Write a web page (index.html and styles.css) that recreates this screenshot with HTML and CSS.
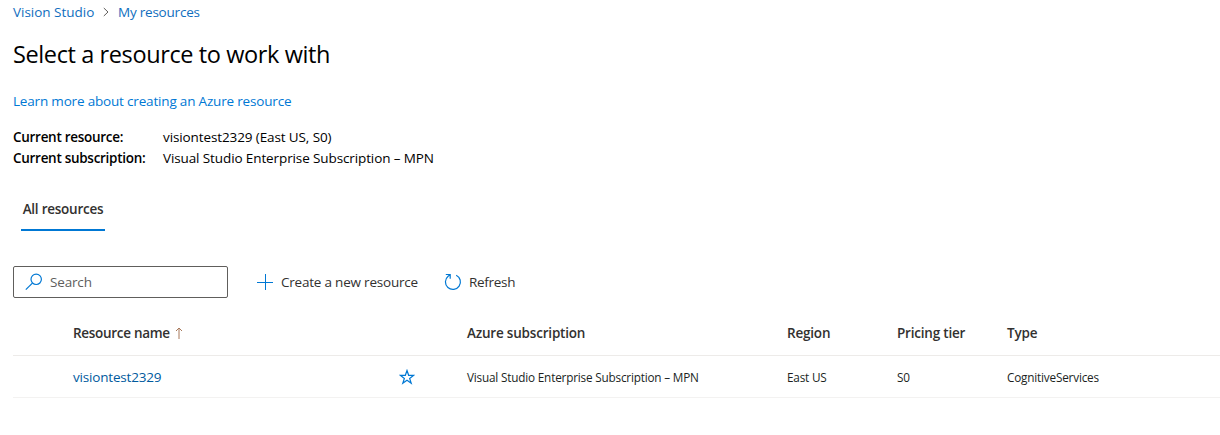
FILE: index.html
```html
<!DOCTYPE html>
<html lang="en">
<head>
<meta charset="utf-8">
<title>Vision Studio - My resources</title>
<link rel="stylesheet" href="styles.css">
</head>
<body>
<main class="page">
  <nav class="breadcrumb">
    <a class="crumb-home">Vision Studio</a>
    <svg class="chevron" width="6" height="10" viewBox="0 0 6 10"><path d="M.8 1 5 5 .8 9"/></svg>
    <a class="crumb-current">My resources</a>
  </nav>
  <h1 class="title"><span>Select a resource to work with</span></h1>
  <p class="learn"><a>Learn more about creating an Azure resource</a></p>
  <dl class="details">
    <dt><span class="label-resource">Current resource:</span></dt><dd><span class="current-resource">visiontest2329 (East US, S0)</span></dd>
    <dt><span class="label-subscription">Current subscription:</span></dt><dd><span class="current-subscription">Visual Studio Enterprise Subscription – MPN</span></dd>
  </dl>
  <div class="tabs"><button class="tab">All resources</button></div>
  <div class="toolbar">
    <div class="search">
      <svg class="icon" width="18" height="18" viewBox="0 0 18 18"><circle cx="11.2" cy="6.3" r="5.2"/><path d="M7.4 10.1.8 16.7"/></svg>
      <span>Search</span>
    </div>
    <button class="action create">
      <svg class="icon plus" width="16" height="16" viewBox="0 0 16 16"><path d="M8 0v16M0 8h16"/></svg>
      <span>Create a new resource</span>
    </button>
    <button class="action refresh">
      <svg class="icon" width="18" height="18" viewBox="0 0 18 18"><path d="M12.2 2.2a7.5 7.5 0 1 1-8.1 1L6 1.8M1.8 1.5H6.2V5.8"/></svg>
      <span>Refresh</span>
    </button>
  </div>
  <div class="table">
    <div class="row head">
      <div class="cell name"><span class="h-name">Resource name</span>
        <svg class="sort" width="8" height="12" viewBox="0 0 8 12"><path d="M4 12V1M1 4l3-3 3 3"/></svg></div>
      <div class="cell"><span class="h-sub">Azure subscription</span></div>
      <div class="cell"><span class="h-region">Region</span></div>
      <div class="cell"><span class="h-tier">Pricing tier</span></div>
      <div class="cell"><span class="h-type">Type</span></div>
    </div>
    <div class="row item">
      <div class="cell name"><a class="resource">visiontest2329</a>
        <svg class="star" width="16" height="16" viewBox="0 0 16 16"><path d="m8 1.5 1.65 4.8h5.1l-4.1 3.1 1.55 4.9L8 11.3l-4.2 3 1.55-4.9-4.1-3.1h5.1Z"/></svg></div>
      <div class="cell value"><span class="c-sub">Visual Studio Enterprise Subscription – MPN</span></div>
      <div class="cell value"><span class="c-region">East US</span></div>
      <div class="cell value"><span class="c-tier">S0</span></div>
      <div class="cell value"><span class="c-type">CognitiveServices</span></div>
    </div>
  </div>
</main>
</body>
</html>
```
FILE: styles.css
```css
* { box-sizing: border-box; }
body { margin: 0; background: #fff; color: #000; font: 13.5px/20px "Open Sans", "Noto Sans", sans-serif; letter-spacing: -.16px; overflow: hidden; }
.page { padding: 2px 0 0 13px; }
a { color: #0078d4; text-decoration: none; white-space: nowrap; }
svg { fill: none; flex: none; }
span { white-space: nowrap; }
button { font: inherit; letter-spacing: inherit; background: none; border: 0; padding: 0; }
.breadcrumb { display: flex; align-items: center; height: 20px; }
.breadcrumb a { color: #106ebe; }
.crumb-home { width: 90px; letter-spacing: -.02px; }
.chevron { stroke: #605e5c; margin-right: 9px; }
.crumb-current { letter-spacing: -.22px; }
.title { margin: 16px 0 0; height: 32px; font-size: 23.5px; line-height: 32px; font-weight: 400; letter-spacing: -.39px; }
.learn { margin: 21px 0 0; height: 20px; letter-spacing: -.18px; }
.details { margin: 16px 0 0; display: grid; grid-template-columns: 150px 1fr; grid-auto-rows: 21px; line-height: 21px; }
.details dd { margin: 0; letter-spacing: -.11px; }
.details dt, .head, .tab { font-weight: 600; }
.details dt { letter-spacing: -.29px; }
.tabs { display: flex; margin: 19px 0 0 8px; }
.tab { width: 84px; height: 43px; border-bottom: 2px solid #0078d4; color: #323130; white-space: nowrap; letter-spacing: -.24px; }
.toolbar { display: flex; align-items: center; height: 32px; margin-top: 35px; color: #323130; }
.search { width: 215px; height: 32px; border: 1px solid #605e5c; border-radius: 2px; display: flex; align-items: center; padding-left: 11px; gap: 7px; color: #605e5c; }
.icon { stroke: #0078d4; stroke-width: 1.2; }
.action { display: flex; align-items: center; gap: 8px; color: #323130; letter-spacing: -.21px; }
.create { margin-left: 29px; width: 187px; }
.plus { shape-rendering: crispEdges; stroke-width: 1; }
.refresh { gap: 7px; letter-spacing: -.3px; }
.table { margin-top: 14px; }
.row { display: grid; grid-template-columns: 394px 320px 110px 110px 1fr; padding-left: 60px; align-items: center; }
.head { height: 44px; padding-bottom: 2px; border-bottom: 1px solid #edebe9; color: #323130; letter-spacing: -.2px; }
.h-name { letter-spacing: -.3px; }
.item { height: 42px; border-bottom: 1px solid #f3f2f1; font-size: 11.75px; letter-spacing: -.19px; color: #201f1e; }
.cell { display: flex; align-items: center; }
.value { padding-top: 1px; }
.sort { stroke: #a8795b; margin-left: 5px; }
.resource { font-size: 13.5px; width: 326px; color: #005a9e; }
.star { stroke: #0078d4; stroke-width: 1.2; }
```
